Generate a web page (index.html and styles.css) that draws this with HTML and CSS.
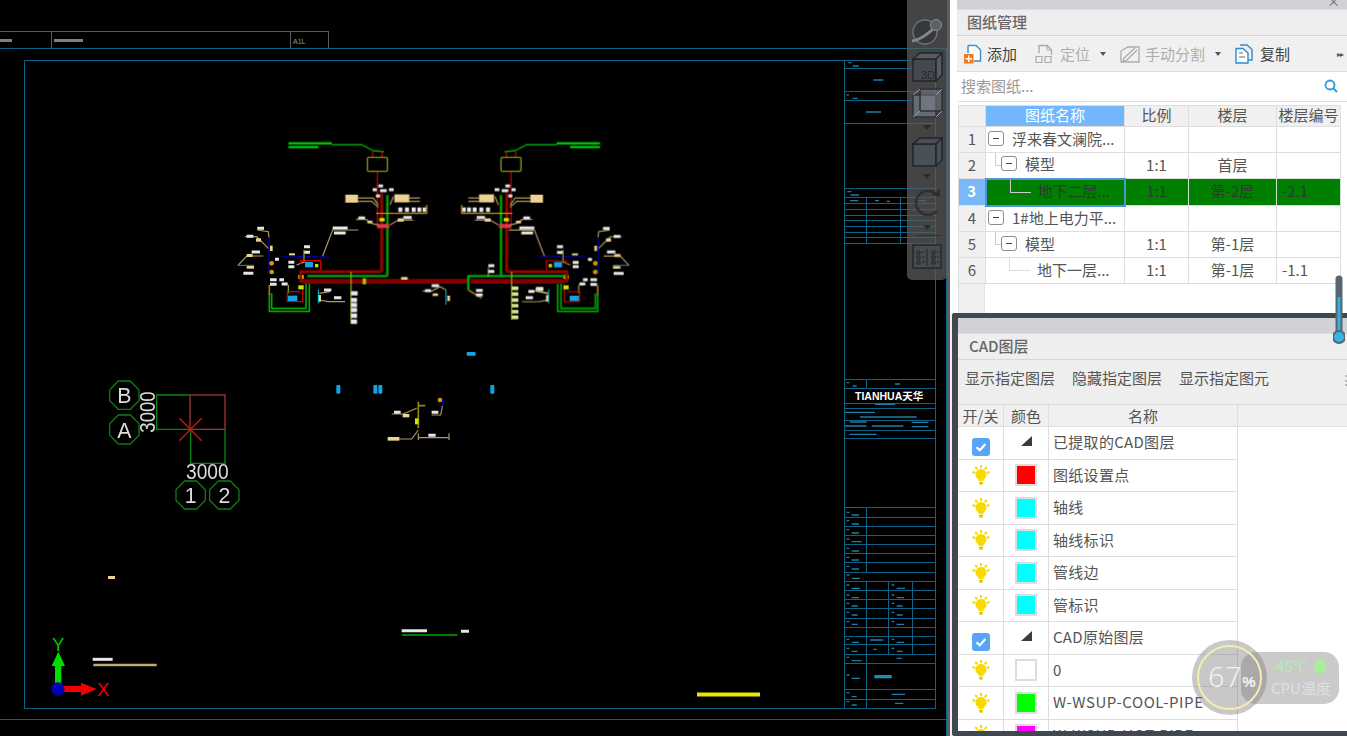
FILE: index.html
```html
<!DOCTYPE html>
<html lang="zh">
<head>
<meta charset="utf-8">
<title>图纸管理</title>
<link rel="stylesheet" href="styles.css">
</head>
<body>
<svg class="defs" width="0" height="0" aria-hidden="true">
  <symbol id="bulb" viewBox="0 0 18 20">
    <path d="M9 4a5.600 5.600 0 0 0-3.300 10c.8.700 1.100 1.300 1.100 2.300h4.400c0-1 .3-1.600 1.100-2.300A5.600 5.600 0 0 0 9 4z" fill="#f6da00"/>
    <path d="M6.900 17h4.200l-.8 2.700H7.700z" fill="#e4c200"/>
    <path d="M9 0V3M3.300 1.800 5.200 4.300M14.700 1.800 12.800 4.300M.5 7 3.300 8M17.500 7 14.700 8" stroke="#f6da00" stroke-width="2" fill="none"/>
  </symbol>
  <symbol id="chk" viewBox="0 0 18 18">
    <rect width="18" height="18" rx="3" fill="#58a4f6"/>
    <path d="M4.500 9.300 7.800 12.300 13.500 6" stroke="#fff" stroke-width="2.200" fill="none"/>
  </symbol>
  <symbol id="tri" viewBox="0 0 11 11">
    <path d="M11 0V10H0z" fill="#3c3c3c"/>
  </symbol>
</svg>
<div class="app">
  <main class="canvas">
    <svg class="drawing" width="947" height="736" viewBox="0 0 947 736">
      <g class="tab">
        <path d="M0 31.500H328M51.500 31V48M290.500 31V48M328.500 31V48"/>
        <text x="293" y="44">A1L</text>
        <path class="tabtxt" d="M0 40.500h12M54 40.500h29"/>
      </g>
      <g class="frame">
        <path d="M0 48.500H947M0 719.500H947M946.500 48V736M24.500 60.500H935.500V708.500H24.500z"/>
        <path d="M844.500 60V708M844 68.500H935M844 91.500H935M844 100.500H935M844 123.500H935M844 188.500H935M844 197.500H935M844 203.500H935M844 209.500H935M844 215.500H935M844 220.500H935M844 226.500H935M844 232.500H935M844 237.500H935M844 243.500H935M866.500 197V243M900.500 197V243"/>
        <path d="M844 379.500H935M844 388.500H935M844 403.500H935M844 408.500H935M844 420.500H935M844 430.500H935M844 438.500H935M844 507.500H935M844 517.500H935M844 526.500H935M844 535.500H935M844 544.500H935M844 553.500H935M844 562.500H935M844 572.500H935M844 581.500H935M844 590.500H935M844 599.500H935M844 608.500H935M844 618.500H935M844 627.500H935M844 636.500H935M844 644.500H935M844 654.500H935M844 663.500H935M844 689.500H935M844 699.500H935"/>
        <path d="M866.500 379V388M866.500 507V572M866.500 581V708M888.500 581V654M912.500 581V654"/>
      </g>
      <g class="tb soft" transform="translate(840 0) scale(.3333)">
        <path d="M25 188h10M38 198h18M100 240h30M20 285h6M38 295h15M78 336h45M22 575h12M32 585h25M30 602h25M105 602h12M140 604h10M235 602h22"/>
      </g>
      <g class="tb soft" transform="translate(840 370) scale(.3333)">
        <path d="M20 38h8M38 48h12M165 42h15M105 103h60M15 127h90M60 141h170M30 156h50M15 168h65M95 168h95M215 157h50M215 170h50M28 193h82M20 427h8M35 435h22M20 452h8M35 462h22M20 479h8M35 489h22M20 507h8M35 515h30M20 535h8M35 543h22M20 562h8M35 570h22M20 589h8M35 597h22M20 615h8M35 625h25M20 645h8M35 655h25M155 645h8M170 655h25M20 675h8M35 683h22M155 675h8M170 683h22M20 700h8M35 708h18M155 700h8M170 708h18M20 727h8M35 735h18M155 727h8M170 735h18M20 755h8M35 763h18M155 755h8M170 763h22M20 808h8M35 817h22M90 810h40M155 808h8M170 817h22M20 835h8M35 844h18M100 838h10M155 835h8M170 844h18M20 862h8M35 872h30M170 865h15M20 915h8M35 925h25M20 968h8M35 980h15M20 995h8M35 1005h15M155 973h40M165 1000h25"/>
        <path class="thick" d="M103 920h52"/>
      </g>
      <text class="brand" x="855" y="400">TIANHUA天华</text>

      <!-- pipe diagram, coordinates of the 3x detail -->
      <g class="soft" transform="translate(230 130) scale(.3333)">
        <g id="inner">
          <path class="p gr" d="M305 44H395L430 62 462 65"/>
          <path class="blob green" d="M175 40h130M175 51h90"/>
          <path class="p rd" d="M428 64V80M456 66V80"/>
          <rect class="olive" x="412" y="82" width="60" height="42" rx="4"/>
          <path class="p dr8" d="M455 190V425"/>
          <path class="p gr8" d="M472 195V438"/>
          <path class="p rd" d="M442 125V295"/>
          <rect class="hot" x="442" y="282" width="36" height="12"/>
          <rect class="lemon" x="448" y="264" width="16" height="10"/>
          <path class="p tan" d="M384 204H430L445 225M384 214H425L445 232M538 204H570M538 214H570M490 200 480 225M378 268H408L425 280 445 285M480 285 505 270H550"/>
          <path class="p org" d="M438 250H590V225"/>
          <rect class="sand" x="346" y="194" width="38" height="24"/>
          <rect class="sand" x="493" y="193" width="45" height="24"/>
          <rect class="sand" x="412" y="272" width="15" height="8"/>
          <rect class="sand" x="503" y="265" width="18" height="10"/>
          <path class="blob white" d="M445 168h14M428 179h12M450 182h20M477 179h14M438 198h12M385 264h20M520 262h25"/>
          <path class="blob whiteb" d="M505 239h12M525 239h12M545 239h12M562 239h12M578 239h10"/>
        </g>
        <use href="#inner" transform="translate(1285 0) scale(-1 1)"/>
        <g id="outer">
          <path class="p blu" d="M117 322V430"/>
          <path class="p blu dash" d="M155 379H298"/>
          <path class="p tan" d="M82 300 115 305 117 322M45 320H80L115 355M25 405 50 378H100M200 405 225 395M278 378 308 300H385M268 490 300 485M268 510 295 515H345"/>
          <path class="p tea" d="M22 406H72"/>
          <circle class="amber" cx="125" cy="400" r="7"/>
          <circle class="amber" cx="125" cy="426" r="7"/>
          <rect class="sand" x="120" y="347" width="8" height="16"/>
          <rect class="sand" x="50" y="408" width="22" height="8"/>
          <rect class="sand" x="78" y="325" width="15" height="10"/>
          <rect class="sand" x="50" y="372" width="18" height="9"/>
          <rect class="sand" x="177" y="370" width="18" height="6"/>
          <rect class="sand" x="265" y="495" width="8" height="20"/>
          <path class="blob white" d="M82 295h20M50 319h20M65 366h25M40 430h30M175 397h18M175 410h18M222 350h18M222 367h18M135 388h12M120 449h20M120 463h20M148 449h14M155 462h18M282 480h22M312 503h22"/>
          <path class="p lime" d="M222 360V395M175 465V490"/>
          <path class="p rd" d="M212 402V392H272V420M210 485H172V515H218V465"/>
          <rect class="azure" x="225" y="396" width="24" height="16"/>
          <rect class="azure" x="174" y="497" width="28" height="16"/>
          <rect class="lemon" x="205" y="435" width="16" height="12"/>
          <rect class="lemon" x="205" y="466" width="16" height="12"/>
          <rect class="lemon" x="255" y="402" width="10" height="10"/>
          <path class="p gr5" d="M238 460V544H118V490M228 460V535H125V490"/>
          <path class="p br" d="M118 465V495"/>
          <path class="p cy" d="M265 478V520"/>
          <path class="blob white" d="M308 294h45M312 309h35"/>
        </g>
        <use href="#outer" transform="translate(1221 0) scale(-1 1)"/>
        <path class="p main" d="M215 454H712M722 454H1005"/>
        <path class="p dr8" d="M212 458V425H455M830 425H1010V458"/>
        <path class="p gr8" d="M232 438H472M1005 438H720H715V480"/>
        <path class="p br" d="M715 480 755 505"/>
        <rect class="lime-f" x="398" y="445" width="10" height="18"/>
        <rect class="sand" x="513" y="441" width="20" height="8"/>
        <path class="p lime" d="M363 425V580M845 425V570"/>
        <path class="blob whiteb" d="M363 490h20M363 510h18M363 525h18M363 540h18M363 557h18M363 575h18"/>
        <path class="blob lemonb" d="M845 475h20M845 492h20M845 510h20M845 527h20M845 545h20M845 562h20"/>
        <path class="p tan" d="M578 483H605L630 470 648 480M775 440V412M900 483H925L955 490"/>
        <path class="p cy" d="M648 480V524"/>
        <rect class="sand" x="608" y="490" width="16" height="8"/>
        <rect class="sand" x="652" y="497" width="8" height="16"/>
        <path class="blob white" d="M605 467h22M585 482h18M775 407h18M775 424h18M738 481h20M738 495h20M918 475h22M895 484h18"/>
      </g>
      <g class="soft" transform="translate(320 340) scale(.3333)">
        <rect class="azure" x="440" y="36" width="27" height="11" rx="3"/>
        <rect class="azure" x="49" y="135" width="12" height="26" rx="3"/>
        <rect class="azure" x="160" y="135" width="12" height="26" rx="3"/>
        <rect class="azure" x="175" y="135" width="12" height="26" rx="3"/>
        <rect class="azure" x="511" y="135" width="12" height="26" rx="3"/>
        <path class="p oli" d="M295 185V265M295 197H316"/>
        <rect class="lemon" x="285" y="235" width="10" height="18"/>
        <path class="p tan" d="M215 222H250L290 205M205 297H275L295 270M295 293H385M295 280V300M387 280V300M335 225H362L368 195"/>
        <rect class="sand" x="248" y="222" width="20" height="10"/>
        <rect class="sand" x="203" y="291" width="35" height="11"/>
        <circle class="amber" cx="360" cy="180" r="7"/>
        <path class="p blu" d="M368 180V198"/>
        <path class="blob white" d="M222 217h20M335 217h20M325 286h22"/>
      </g>
      <rect class="sand soft1" x="108" y="576" width="7" height="3"/>
      <g class="soft" transform="translate(380 620) scale(.3333)">
        <path class="blob white" d="M65 32h76M243 34h24"/>
        <path class="p gr" d="M66 45H232"/>
      </g>
      <path class="yel soft1" d="M697 694.500H760"/>

      <!-- axis grid -->
      <g class="grid-soft" transform="translate(90 370) scale(.3333)">
        <path class="axis" d="M300 75H200V178H302V280H405V178"/>
        <rect class="bay" x="300" y="75" width="105" height="103"/>
        <path class="cross" d="M268 145 335 212M335 145 268 212"/>
        <g class="oct">
          <path d="M85 33 121 33 147 60 147 92 121 118 85 118 59 92 59 60z"/>
          <path d="M85 135 121 135 147 161 147 196 121 222 85 222 59 196 59 161z"/>
          <path d="M284 333 320 333 346 359 346 391 320 417 284 417 258 391 258 359z"/>
          <path d="M385 333 421 333 447 359 447 391 421 417 385 417 359 391 359 359z"/>
        </g>
        <g class="gridtxt">
          <text x="103" y="100">B</text>
          <text x="103" y="203">A</text>
          <text x="302" y="400">1</text>
          <text x="403" y="400">2</text>
          <text x="352" y="326" textLength="128" lengthAdjust="spacingAndGlyphs">3000</text>
          <text transform="translate(195 126) rotate(-90)" textLength="124" lengthAdjust="spacingAndGlyphs">3000</text>
        </g>
      </g>

      <!-- UCS icon -->
      <g transform="translate(0 620) scale(.3333)">
        <path class="ygreen" d="M165 190V138H155L175 95 195 138H184V190z"/>
        <path class="xred" d="M190 198H243V188L290 207 243 227V216H190z"/>
        <circle class="ucs" cx="174" cy="207" r="20"/>
        <text class="ax-y" x="175" y="92">Y</text>
        <text class="ax-x" x="310" y="229">X</text>
        <path class="blob white soft" d="M278 118h60"/>
        <path class="p khaki" d="M280 135H470"/>
      </g>
    </svg>

    <nav class="viewtools">
      <svg class="vi vi-sphere" width="34" height="30" viewBox="0 0 34 30">
        <circle cx="15" cy="16" r="12" fill="#34383c" stroke="#6c7074" stroke-width="1.500"/>
        <path d="M2 25C10 24 22 16 29 6" stroke="#82868a" stroke-width="3" fill="none"/>
        <circle cx="26" cy="9" r="5.500" fill="#5c6064" stroke="#8a8e92"/>
      </svg>
      <svg class="vi vi-cube" width="32" height="30" viewBox="0 0 32 30">
        <path d="M2 7H25V29H2z" fill="#44494f" stroke="#22262a" stroke-width="1.500"/>
        <path d="M2 7 9 1H31L25 7zM25 7 31 1V23L25 29z" fill="#565b60" stroke="#22262a" stroke-width="1.500"/>
        <text class="txt3d" x="10" y="27">3D</text>
      </svg>
      <svg class="vi vi-cube2" width="32" height="30" viewBox="0 0 32 30">
        <path d="M2 7H25V29H2z" fill="#656c75" stroke="#2e3236" stroke-width="1.500"/>
        <path d="M9 1H31V23H9z" fill="#7c838b" fill-opacity=".45" stroke="#2e3236" stroke-width="1.500"/>
        <path d="M2 7 9 1M25 7 31 1M25 29 31 23M2 29 9 23" stroke="#9aa0a8" stroke-width="1"/>
      </svg>
      <i class="caret-v"></i>
      <svg class="vi vi-cube3" width="32" height="30" viewBox="0 0 32 30">
        <path d="M2 7H25V29H2z" fill="#4a5058" stroke="#22262a" stroke-width="1.500"/>
        <path d="M2 7 9 1H31L25 7zM25 7 31 1V23L25 29z" fill="#4a4f55" stroke="#22262a" stroke-width="1.500"/>
      </svg>
      <i class="caret-v"></i>
      <svg class="vi vi-rot" width="32" height="30" viewBox="0 0 32 30">
        <path d="M25 6A12 12 0 1 0 26 23" stroke="#2c3034" stroke-width="2.500" fill="none"/>
        <path d="M21 7 29 1V9z" fill="#2c3034"/>
      </svg>
      <i class="caret-v"></i>
      <i class="vt-line"></i>
      <svg class="vi vi-tbl" width="32" height="27" viewBox="0 0 32 27">
        <path d="M2 3H30V26H2z" fill="#474b50" stroke="#25282b" stroke-width="1.500"/>
        <path d="M16 7V24M6 9h3v3H6zM6 14h3v3H6zM6 19h3v3H6zM21 9h3v3h-3zM21 14h3v3h-3zM21 19h3v3h-3zM11 10h3M11 15h3M11 20h3M26 10h2M26 15h2M26 20h2" stroke="#22262a" fill="none"/>
      </svg>
    </nav>
  </main>

  <aside class="side">
    <section class="sheets">
      <div class="strip"><span class="close">×</span></div>
      <h2 class="phead">图纸管理</h2>
      <div class="tools">
        <span class="tool t-add">
          <svg width="18" height="20" viewBox="0 0 18 20"><path d="M4 1.500H12L16.500 6V17H10" fill="#fff" stroke="#3a8fd0" stroke-width="1.400"/><path d="M4 1.500V9" stroke="#3a8fd0" stroke-width="1.400"/><rect y="10" x="0" width="9.500" height="9.500" fill="#f07a1c"/><path d="M4.700 11.500v6.500M1.500 14.700H8" stroke="#fff" stroke-width="1.400"/></svg>
          <span>添加</span>
        </span>
        <span class="tool t-loc off">
          <svg width="18" height="20" viewBox="0 0 18 20"><path d="M4 1.500H12L16.500 6V11M4 1.500V9" fill="none" stroke="#aaa" stroke-width="1.400"/><path d="M1 12.500h6v6H1zM10 12.500h6v6h-6z" fill="none" stroke="#aaa" stroke-width="1.200"/><path d="M12 1.500V6H16.500" fill="none" stroke="#aaa"/></svg>
          <span>定位</span><i class="caret"></i>
        </span>
        <span class="tool t-split off">
          <svg width="20" height="20" viewBox="0 0 20 20"><path d="M1 7 8 3H19V18H1z" fill="none" stroke="#aaa" stroke-width="1.300"/><path d="M4 14 15 4M4 14 3 17.500 7 16 17 6" fill="none" stroke="#aaa" stroke-width="1.300"/></svg>
          <span>手动分割</span><i class="caret"></i>
        </span>
        <span class="tool t-copy">
          <svg width="18" height="20" viewBox="0 0 18 20"><path d="M5 1H12L17 5.500V16H13" fill="none" stroke="#2e8ad0" stroke-width="1.400"/><path d="M1 4.500H8L13 9V19H1z" fill="#fff" stroke="#2e8ad0" stroke-width="1.400"/><path d="M4 9h4M4 13h6" stroke="#667" stroke-width="1"/></svg>
          <span>复制</span>
        </span>
        <span class="more">&#9656;&#9656;</span>
      </div>
      <div class="search">
        <span class="ph">搜索图纸...</span>
        <svg width="14" height="14" viewBox="0 0 14 14"><circle cx="6" cy="6" r="4.500" fill="none" stroke="#2d9bd8" stroke-width="1.800"/><path d="M9.500 9.500 13 13" stroke="#2d9bd8" stroke-width="2"/></svg>
      </div>
      <table class="sheet-table">
        <colgroup><col class="c0"><col class="c1"><col class="c2"><col class="c3"><col class="c4"></colgroup>
        <thead>
          <tr><th></th><th class="picked">图纸名称</th><th>比例</th><th>楼层</th><th>楼层编号</th></tr>
        </thead>
        <tbody>
          <tr><th>1</th><td class="name l1"><i class="node"></i>浮来春文澜院...</td><td></td><td></td><td></td></tr>
          <tr><th>2</th><td class="name l2"><i class="link-a"></i><i class="node"></i>模型</td><td>1:1</td><td>首层</td><td></td></tr>
          <tr class="sel"><th>3</th><td class="name l3"><i class="link-b"></i>地下二层...</td><td>1:1</td><td>第-2层</td><td class="code">-2.1</td></tr>
          <tr><th>4</th><td class="name l1"><i class="node"></i>1#地上电力平...</td><td></td><td></td><td></td></tr>
          <tr><th>5</th><td class="name l2"><i class="link-a"></i><i class="node"></i>模型</td><td>1:1</td><td>第-1层</td><td></td></tr>
          <tr><th>6</th><td class="name l3"><i class="link-b pale"></i>地下一层...</td><td>1:1</td><td>第-1层</td><td class="code">-1.1</td></tr>
        </tbody>
      </table>
      <div class="rest"><div class="rest-h"></div></div>
    </section>

    <section class="layers">
      <div class="strip2"></div>
      <h2 class="phead2">CAD图层</h2>
      <div class="ltools"><span>显示指定图层</span><span>隐藏指定图层</span><span>显示指定图元</span><i class="grip"></i></div>
      <div class="lhead"><span class="h1">开/关</span><span class="h2">颜色</span><span class="h3">名称</span></div>
      <div class="lrows">
        <div class="lrow group"><span class="a"><svg class="ck" width="18" height="18"><use href="#chk"/></svg></span><span class="b"><svg class="tr" width="11" height="11"><use href="#tri"/></svg></span><span class="c">已提取的CAD图层</span></div>
        <div class="lrow"><span class="a"><svg width="18" height="20"><use href="#bulb"/></svg></span><span class="b"><i class="sw red"></i></span><span class="c">图纸设置点</span></div>
        <div class="lrow"><span class="a"><svg width="18" height="20"><use href="#bulb"/></svg></span><span class="b"><i class="sw cyan"></i></span><span class="c">轴线</span></div>
        <div class="lrow"><span class="a"><svg width="18" height="20"><use href="#bulb"/></svg></span><span class="b"><i class="sw cyan"></i></span><span class="c">轴线标识</span></div>
        <div class="lrow"><span class="a"><svg width="18" height="20"><use href="#bulb"/></svg></span><span class="b"><i class="sw cyan"></i></span><span class="c">管线边</span></div>
        <div class="lrow"><span class="a"><svg width="18" height="20"><use href="#bulb"/></svg></span><span class="b"><i class="sw cyan"></i></span><span class="c">管标识</span></div>
        <div class="lrow group"><span class="a"><svg class="ck" width="18" height="18"><use href="#chk"/></svg></span><span class="b"><svg class="tr" width="11" height="11"><use href="#tri"/></svg></span><span class="c">CAD原始图层</span></div>
        <div class="lrow"><span class="a"><svg width="18" height="20"><use href="#bulb"/></svg></span><span class="b"><i class="sw"></i></span><span class="c">0</span></div>
        <div class="lrow"><span class="a"><svg width="18" height="20"><use href="#bulb"/></svg></span><span class="b"><i class="sw lime-s"></i></span><span class="c lat">W-WSUP-COOL-PIPE</span></div>
        <div class="lrow"><span class="a"><svg width="18" height="20"><use href="#bulb"/></svg></span><span class="b"><i class="sw mag"></i></span><span class="c lat">W-WSUP-HOT-PIPE</span></div>
      </div>
    </section>
  </aside>

  <svg class="thermo" width="12" height="76" viewBox="0 0 12 76">
    <path d="M6 6V60" stroke="#566672" stroke-width="7" stroke-linecap="round"/>
    <path d="M6 24V60" stroke="#36aee0" stroke-width="3"/>
    <circle cx="6" cy="64" r="6" fill="#36b4e6" stroke="#566672" stroke-width="2"/>
  </svg>

  <div class="cpu">
    <div class="cpu-pill">
      <div class="cpu-t"><span>45℃</span><svg width="12" height="18" viewBox="0 0 12 18"><path d="M6 0C10 4 12 7 12 11 12 15 9 17 6 17 3 17 0 15 0 11 0 7 3 3 6 0z" fill="#a8ec9c"/></svg></div>
      <div class="cpu-l">CPU温度</div>
    </div>
    <div class="cpu-disc"><div class="cpu-ring"><span class="n">67</span><span class="pc">%</span></div></div>
  </div>
</div>
</body>
</html>
```
FILE: styles.css
```css
* { box-sizing: border-box; }
html, body { margin: 0; padding: 0; height: 736px; overflow: hidden; background: #000; }
body { font-family: "Noto Sans CJK SC", "Noto Sans", sans-serif; font-size: 15px; color: #444; }
.defs { position: absolute; }
.app { position: relative; display: flex; width: 1347px; height: 736px; overflow: hidden; filter: blur(.45px); }

/* drawing */
.canvas { position: relative; width: 947px; height: 736px; background: #000; flex: none; }
.drawing { display: block; }
.soft { filter: blur(1.6px); }
.soft1 { filter: blur(.6px); }
.grid-soft { filter: blur(.8px); }
.tab path { fill: none; stroke: #5a5a5a; stroke-width: 1; }
.tab .tabtxt { stroke: #808080; stroke-width: 3; }
.tab text { font: 7px "Liberation Sans", sans-serif; fill: #999; }
.frame path { fill: none; stroke: #0b6487; stroke-width: 1; }
.tb path { fill: none; stroke: #1d7ea6; stroke-width: 4; }
.tb .thick { stroke: #1f8db8; stroke-width: 10; }
.brand { font: bold 10.500px "Liberation Sans", "Noto Sans CJK SC", sans-serif; fill: #fff; }
.p { fill: none; stroke-width: 3; stroke-linejoin: miter; }
.gr { stroke: #00a800; stroke-width: 4; }
.gr5 { stroke: #00a400; stroke-width: 5; }
.gr8 { stroke: #00a800; stroke-width: 7; }
.rd { stroke: #d80000; stroke-width: 3.500; }
.dr8 { stroke: #960000; stroke-width: 9; }
.main { stroke: #820000; stroke-width: 14; }
.tan { stroke: #b09a62; stroke-width: 3.500; }
.org { stroke: #c89418; stroke-width: 4; }
.blu { stroke: #0000a8; stroke-width: 3.500; }
.dash { stroke-dasharray: 18 5; }
.tea { stroke: #00a0a0; }
.cy { stroke: #00c8d8; }
.lime { stroke: #9cb010; stroke-width: 3.500; }
.br { stroke: #a87414; stroke-width: 5; }
.oli { stroke: #8c8a10; stroke-width: 5; }
.khaki { stroke: #c2aa72; stroke-width: 7; }
.olive { fill: none; stroke: #8a9a00; stroke-width: 4; }
.hot { fill: #e0384a; }
.lemon { fill: #c9e800; }
.lime-f { fill: #a8d000; }
.sand { fill: #eed292; }
.amber { fill: #d49a00; }
.azure { fill: #12a4e4; }
.yel { fill: none; stroke: #e8e800; stroke-width: 4; }
.blob { fill: none; }
.green { stroke: #00d000; stroke-width: 7; }
.white { stroke: #e6e6e6; stroke-width: 9; }
.whiteb { stroke: #e8e8e8; stroke-width: 13; }
.lemonb { stroke: #d4e890; stroke-width: 11; }
.axis { fill: none; stroke: #0b8414; stroke-width: 4; }
.bay { fill: none; stroke: #a03232; stroke-width: 4; }
.cross { fill: none; stroke: #d01414; stroke-width: 4; }
.oct path { fill: none; stroke: #0c7c14; stroke-width: 4; }
.gridtxt text { font: 64px "Liberation Sans Narrow", "Liberation Sans", sans-serif; fill: #dcdcdc; text-anchor: middle; }
.ygreen { fill: #00e000; }
.xred { fill: #f00000; }
.ucs { fill: #0000b4; }
.ax-y, .ax-x { font: 56px "Liberation Sans Narrow", "Liberation Sans", sans-serif; text-anchor: middle; }
.ax-y { fill: #00c800; }
.ax-x { fill: #e80000; }

/* floating view tools */
.viewtools { position: absolute; left: 907px; top: 0; width: 40px; height: 280px; padding-top: 16px; display: flex; flex-direction: column; align-items: center; background: rgba(92, 92, 92, .74); border-radius: 0 0 5px 5px; }
.vi { display: block; flex: none; }
.vi-cube { margin-top: 6px; }
.vi-cube2 { margin-top: 6px; }
.vi-cube3 { margin-top: 7px; }
.vi-rot { margin-top: 9px; }
.vi-tbl { margin-top: 6px; }
.caret-v { flex: none; width: 0; height: 0; margin-top: 7px; border-left: 4px solid transparent; border-right: 4px solid transparent; border-top: 5px solid #2c2c2c; }
.vt-line { flex: none; width: 27px; height: 1px; margin-top: 5px; background: #333; }
.txt3d { font: 11px "Liberation Sans", sans-serif; fill: #26292c; }

/* side */
.side { flex: none; width: 400px; height: 736px; display: flex; flex-direction: column; border-left: 3px solid #5e5e5e; background: #efefef; }
.sheets { flex: none; height: 313px; padding-left: 7px; display: flex; flex-direction: column; background: #fff; }
.strip { flex: none; height: 9px; background: #d0d2d6; position: relative; }
.close { position: absolute; right: 7px; top: -6px; font-size: 13px; line-height: 14px; color: #666; }
.phead { flex: none; margin: 0; height: 27px; padding-left: 10px; font-size: 15px; line-height: 23px; font-weight: 500; color: #666; background: #eeeeee; border-top: 1px solid #ddd; border-bottom: 1px solid #d4d4d4; }
.tools { flex: none; height: 36px; display: flex; align-items: center; padding-left: 7px; background: #f0f0f0; border-bottom: 1px solid #ddd; color: #444; }
.tool { display: flex; align-items: center; }
.tool svg { flex: none; }
.t-add { gap: 5px; margin-right: 18px; }
.t-loc { gap: 7px; margin-right: 14px; }
.t-split { gap: 5px; margin-right: 14px; }
.t-copy { gap: 7px; }
.t-split .caret { margin-left: 5px; }
.off { color: #aeaeae; }
.caret { width: 0; height: 0; margin-left: 3px; border-left: 3.500px solid transparent; border-right: 3.500px solid transparent; border-top: 4px solid #555; }
.more { margin-left: auto; padding-right: 4px; font-size: 8px; letter-spacing: -1px; color: #555; white-space: nowrap; }
.search { flex: none; height: 30px; margin: 0 0 0 1px; display: flex; align-items: center; justify-content: space-between; padding: 0 9px 2px 3px; background: #fff; border-bottom: 1px solid #ddd; color: #999; }
.sheet-table { flex: none; width: 382px; margin: 3px 0 0 1px; table-layout: fixed; border-collapse: collapse; font-size: 15px; color: #555; }
.c0 { width: 27px; } .c1 { width: 139px; } .c2 { width: 64px; } .c3 { width: 88px; } .c4 { width: 64px; }
.sheet-table thead tr { height: 21px; }
.sheet-table tbody tr { height: 26px; }
.sheet-table tbody tr.sel { height: 27px; }
.sheet-table th, .sheet-table td { padding: 0 0 2px; border: 1px solid #dedede; text-align: center; white-space: nowrap; overflow: hidden; line-height: 20px; }
.sheet-table th { background: #f0f0f0; font-weight: 400; color: #555; }
.sheet-table thead th { font-size: 15px; line-height: 18px; }
.sheet-table th.picked { background: #72b6fb; color: #fff; }
.name { position: relative; text-align: left !important; }
.l1 { padding-left: 2px !important; }
.l2 { padding-left: 15px !important; }
.l3 { padding-left: 51px !important; }
.node { display: inline-block; vertical-align: -1px; width: 16px; height: 15px; margin-right: 8px; border: 1px solid #8c8c8c; border-radius: 3px; position: relative; background: #fff; }
.node::after { content: ""; position: absolute; left: 4px; top: 6px; width: 6px; height: 1px; background: #444; }
.link-a { position: absolute; left: 9px; top: -5px; width: 7px; height: 18px; border-left: 1px solid #ccc; border-bottom: 1px solid #ccc; }
.link-b { position: absolute; left: 23px; top: 0; width: 21px; height: 13px; border-left: 1px solid #ccc; border-bottom: 1px solid #ccc; }
.pale { border-color: #ddd; }
.code { text-align: left !important; padding-left: 5px !important; }
.sel th { background: #7ab8f8; color: #fff; font-weight: 700; }
.sel td { background: #008000; color: #2a3d2a; border-color: #cfe0cf; }
.sel .name { border: 2px solid #4f96dc; }
.rest { flex: 1; min-height: 0; margin-left: 1px; }
.rest-h { width: 27px; height: 100%; background: #f0f0f0; border-right: 1px solid #e4e4e4; border-left: 1px solid #dedede; }

.layers { flex: 1; min-height: 0; margin-left: 2px; border: solid #41474e; border-width: 5px 0 5px 6px; border-radius: 3px 0 0 3px; background: #fff; display: flex; flex-direction: column; overflow: hidden; }
.strip2 { flex: none; height: 15px; background: #d0d2d6; }
.phead2 { flex: none; margin: 0; height: 27px; padding-left: 11px; font-size: 15px; line-height: 24px; font-weight: 500; color: #666; background: #eee; border-top: 1px solid #ddd; border-bottom: 1px solid #d8d8d8; }
.ltools { flex: none; height: 45px; display: flex; align-items: center; padding: 0 0 9px 7px; gap: 17px; background: #eee; border-bottom: 1px solid #ddd; color: #555; position: relative; }
.grip { position: absolute; right: 0; top: 15px; width: 2px; height: 11px; border-left: 2px dotted #bbb; }
.lhead { flex: none; height: 22px; display: flex; background: #f0f0f0; text-align: center; line-height: 21px; color: #555; border-bottom: 1px solid #ddd; }
.lhead span { border-right: 1px solid #ddd; }
.h1 { width: 46px; white-space: nowrap; }
.h2 { width: 45px; }
.h3 { width: 189px; }
.lrows { flex: 1; min-height: 0; overflow: hidden; }
.lrow { height: 32.500px; width: 280px; display: flex; border-bottom: 1px solid #ddd; color: #555; }
.lrow span { display: flex; align-items: center; border-right: 1px solid #ddd; }
.a { width: 46px; justify-content: center; }
.b { width: 45px; justify-content: center; }
.c { width: 189px; padding: 0 0 2px 4px; white-space: nowrap; letter-spacing: .3px; }
.lat { letter-spacing: .6px; }
.ck { margin-top: 8px; }
.tr { margin: -3px 0 0 0; }
.sw { display: block; width: 22px; height: 22px; border: 2px solid #ddd; background: #fff; }
.red { background: #f00; }
.cyan { background: #0ff; }
.lime-s { background: #0f0; }
.mag { background: #f0f; }

/* overlays */
.thermo { position: absolute; left: 1333px; top: 273px; }
.cpu { position: absolute; left: 1191px; top: 640px; width: 148px; height: 76px; }
.cpu-pill { position: absolute; left: 50px; top: 12px; width: 98px; height: 52px; padding: 3px 0 0 35px; border-radius: 15px; background: rgba(150, 150, 150, .5); }
.cpu-t { display: flex; align-items: center; gap: 6px; color: #b4efaa; font-size: 15px; line-height: 22px; }
.cpu-l { color: #e0e0e0; font-size: 15px; line-height: 22px; margin-left: -5px; white-space: nowrap; }
.cpu-disc { position: absolute; left: 1px; top: 0; width: 75px; height: 75px; padding: 5px; border-radius: 50%; background: rgba(125, 125, 125, .42); }
.cpu-ring { width: 65px; height: 65px; border: 2px solid #f4eeac; border-radius: 50%; display: flex; align-items: baseline; justify-content: center; padding: 11px 0 0 5px; color: #f6f6f6; }
.n { font: 300 28px "Open Sans", "Noto Sans", sans-serif; letter-spacing: 1px; line-height: 36px; }
.pc { font: bold 15px "Liberation Sans", sans-serif; }
```
